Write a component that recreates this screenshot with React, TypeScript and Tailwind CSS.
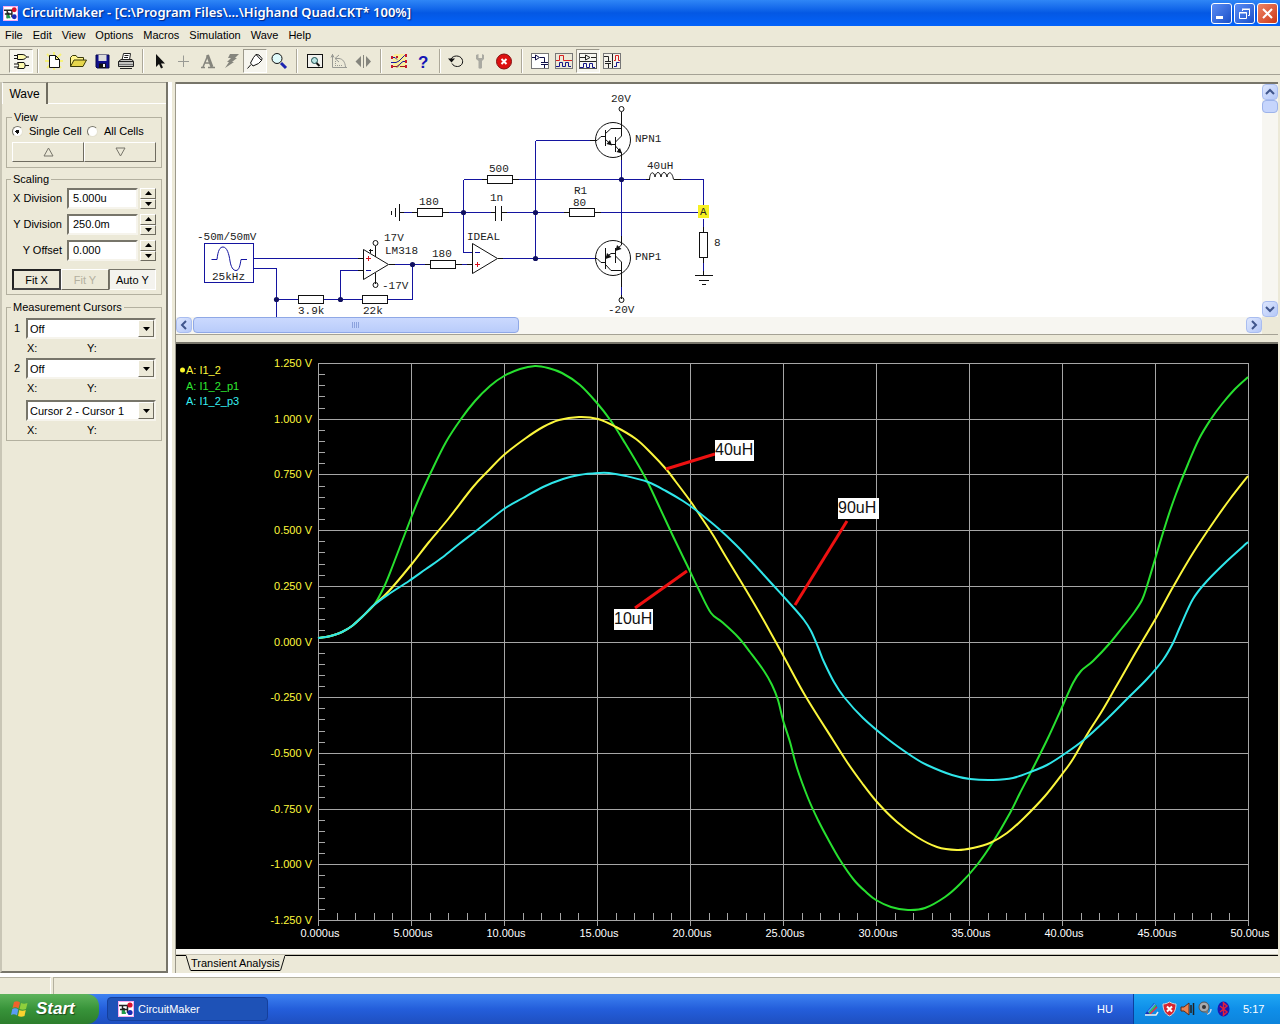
import React from "react";

type Pt = [number, number];

const START: Pt[] = [[318, 638], [326, 637], [334, 635], [342, 632], [352, 626], [362, 617], [374, 605]];

const GREEN: Pt[] = [
  ...START,
  [384, 587], [393, 565], [411, 518], [420, 496], [432, 470], [446, 442], [461, 419], [475, 401], [490, 386], [504, 376],
  [520, 369], [535, 366], [548, 368], [562, 373], [580, 385], [597, 403], [611, 421], [625, 443], [645, 477], [658, 504],
  [672, 534], [687, 565], [699, 590], [711, 613], [722, 622], [738, 637], [750, 652], [764, 671], [772, 685], [778, 700],
  [783, 720], [790, 742], [797, 768], [808, 798], [818, 820], [828, 839], [840, 860], [854, 880], [866, 892], [876, 900],
  [891, 907], [908, 910], [925, 908], [945, 897], [960, 884], [977, 865], [993, 842], [1010, 813], [1020, 793],
  [1032, 770], [1047, 740], [1063, 705], [1073, 683], [1081, 671], [1093, 661], [1110, 643], [1122, 628], [1133, 614],
  [1142, 600], [1147, 586], [1156, 556], [1167, 520], [1176, 494], [1188, 464], [1199, 439], [1211, 419], [1222, 404],
  [1235, 389], [1248, 377],
];

const YELLOW: Pt[] = [
  ...START,
  [389, 591], [411, 565], [429, 542], [449, 518], [473, 487], [489, 470], [505, 454], [526, 438], [543, 427],
  [559, 420], [579, 417], [598, 419], [616, 427], [636, 439], [651, 453], [666, 469], [676, 482], [691, 502], [699, 514],
  [713, 535], [726, 557], [743, 585], [763, 619], [784, 657], [806, 697], [833, 740], [847, 762], [862, 783],
  [877, 802], [897, 822], [917, 837], [937, 847], [957, 850], [973, 848], [990, 843], [1007, 833], [1024, 818],
  [1045, 796], [1063, 773], [1073, 759], [1088, 733], [1102, 711], [1117, 685], [1133, 657], [1156, 618],
  [1173, 587], [1193, 553], [1215, 520], [1230, 499], [1248, 476],
];

const CYAN: Pt[] = [
  ...START,
  [389, 594], [409, 581], [426, 569], [443, 557], [459, 544], [476, 531], [504, 509], [523, 498], [543, 487],
  [563, 479], [579, 475], [598, 473], [609, 473], [626, 476], [648, 482], [666, 491], [683, 501], [697, 511], [719, 529],
  [736, 545], [753, 563], [773, 585], [793, 607], [804, 620], [811, 631], [818, 647], [824, 662], [834, 682], [844, 697],
  [863, 718], [889, 740], [913, 757], [927, 765], [952, 775], [970, 779], [993, 780], [1013, 778], [1033, 771],
  [1047, 765], [1063, 755], [1085, 739], [1108, 718], [1128, 698], [1147, 679], [1163, 660], [1173, 643],
  [1180, 627], [1193, 599], [1207, 581], [1227, 561], [1248, 542],
];

function smooth(p: Pt[]): string {
  let d = `M${p[0][0]},${p[0][1]}`;
  for (let i = 0; i < p.length - 1; i++) {
    const a = p[i - 1] ?? p[i];
    const b = p[i];
    const c = p[i + 1];
    const e = p[i + 2] ?? c;
    d += `C${(b[0] + (c[0] - a[0]) / 6).toFixed(1)},${(b[1] + (c[1] - a[1]) / 6).toFixed(1)} ${(c[0] - (e[0] - b[0]) / 6).toFixed(1)},${(c[1] - (e[1] - b[1]) / 6).toFixed(1)} ${c[0]},${c[1]}`;
  }
  return d;
}

const Y_LABELS = ["1.250 V", "1.000 V", "0.750 V", "0.500 V", "0.250 V", "0.000 V", "-0.250 V", "-0.500 V", "-0.750 V", "-1.000 V", "-1.250 V"];
const X_LABELS = ["0.000us", "5.000us", "10.00us", "15.00us", "20.00us", "25.00us", "30.00us", "35.00us", "40.00us", "45.00us", "50.00us"];

const NOTES = [
  { text: "40uH", x: 715, y: 440, w: 39, line: "M666,469L715,454" },
  { text: "90uH", x: 838, y: 498, w: 41, line: "M795,605L847,521" },
  { text: "10uH", x: 614, y: 609, w: 39, line: "M635,608L687,571" },
];

function WaveChart() {
  const yAt = (i: number) => Math.round(363 + i * 55.7);
  return (
    <svg viewBox="176 344 1102 605" className="block h-auto w-full bg-black" role="img" aria-label="Transient analysis waveforms">
      <g stroke="#a6a6a6" strokeWidth="1" shapeRendering="crispEdges">
        {Y_LABELS.map((_, i) => (
          <line key={i} x1="318" x2="1249" y1={yAt(i) + 0.5} y2={yAt(i) + 0.5} />
        ))}
        {X_LABELS.map((_, i) => (
          <line key={i} x1={318.5 + i * 93} x2={318.5 + i * 93} y1="363" y2="926" />
        ))}
        {Array.from({ length: 50 }, (_, i) => (
          <line key={i} x1="318" x2="325" y1={Math.round(363 + i * 11.14) + 0.5} y2={Math.round(363 + i * 11.14) + 0.5} />
        ))}
        {Array.from({ length: 50 }, (_, i) => (
          <line key={i} y1="913" y2="920" x1={Math.round(318 + i * 18.6) + 0.5} x2={Math.round(318 + i * 18.6) + 0.5} />
        ))}
      </g>
      <g fill="none" strokeWidth="2">
        <path d={smooth(GREEN)} stroke="#27e02f" />
        <path d={smooth(YELLOW)} stroke="#fbf63c" />
        <path d={smooth(CYAN)} stroke="#2fe6ea" />
      </g>
      <g fontFamily="'Liberation Sans', Arial, sans-serif" fontSize="11">
        <circle cx="182.5" cy="370" r="2.5" fill="#fdf62a" />
        <text x="186" y="374" fill="#fff83c">A: I1_2</text>
        <text x="186" y="390" fill="#2fe832">A: I1_2_p1</text>
        <text x="186" y="405" fill="#37efF2">A: I1_2_p3</text>
        {Y_LABELS.map((t, i) => (
          <text key={t} x="312" y={yAt(i) + 4} textAnchor="end" fill="#fff83c">{t}</text>
        ))}
        {X_LABELS.map((t, i) => (
          <text key={t} x={320 + i * 93} y="937" textAnchor="middle" fill="#fff">{t}</text>
        ))}
      </g>
      {NOTES.map((n) => (
        <g key={n.text}>
          <path d={n.line} stroke="#ee1111" strokeWidth="3" />
          <rect x={n.x} y={n.y} width={n.w} height="21" fill="#fff" />
          <text x={n.x} y={n.y + 15} fontFamily="'Liberation Sans', Arial, sans-serif" fontSize="16" fill="#111">{n.text}</text>
        </g>
      ))}
    </svg>
  );
}

function Schematic() {
  const nodes: Pt[] = [[276, 299], [340, 299], [412, 264], [463, 212], [535, 212], [535, 258], [621, 179]];
  const labels: [string, number, number][] = [
    ["20V", 611, 102], ["NPN1", 635, 142], ["500", 489, 172], ["40uH", 647, 169], ["1n", 490, 201], ["R1", 574, 194],
    ["80", 573, 206], ["180", 419, 205], ["IDEAL", 467, 240], ["-50m/50mV", 197, 240], ["25kHz", 212, 280],
    ["17V", 384, 241], ["LM318", 385, 254], ["-17V", 382, 289], ["180", 432, 257], ["3.9k", 298, 314], ["22k", 363, 314],
    ["PNP1", 635, 260], ["-20V", 608, 313], ["8", 714, 246],
  ];
  return (
    <svg width="1085" height="233" viewBox="176 84 1085 233" className="block shrink-0" role="img" aria-label="Circuit schematic">
      <g fill="none" stroke="#1414a0" strokeWidth="1" shapeRendering="crispEdges" transform="translate(.5 .5)">
        <path d="M204,243H253V282H204Z" />
        <path d="M253,258H357M253,268H276V318M276,299H298M323,299H362M387,299H412V264M394,264H424M340,299V270H357M461,264H466" />
        <path d="M403,212H411M448,212H490M463,179V252H472M463,179H481M518,179H645M506,212H563M600,212H698M535,140V258M535,140H590M502,258H596M621,159V237M680,179H703V205M703,218V226M703,262V270M621,285V294" />
      </g>
      <path d="M211.500 259.500H217C218 250 220 247 223 247C227 247 229 254 230 261C231 267 233 270.500 236 270.500C239 270.500 240 266 241 259.500H247" fill="none" stroke="#1414a0" />
      <g fill="none" stroke="#111" strokeWidth="1" shapeRendering="crispEdges" transform="translate(.5 .5)">
        <path d="M357,258H363M357,270H363M375,245V256M375,272V283M388,264H394M368,250H372M370,248V252" />
        <path d="M399,203V220M395,207V216M391,210V214M399,212H403M411,212H417M442,212H448M424,264H430M455,264H461M466,264H472M481,179H487M512,179H518M495,205V220M501,205V220M490,212H495M501,212H506M563,212H569M594,212H600M497,258H502M645,179H649M673,179H680M703,226V232M703,257V262M703,270V275M694,275H712M698,280H708M701,284H705" />
        <path d="M298,295H323V303H298ZM362,295H387V303H362ZM430,260H455V268H430ZM417,208H442V216H417ZM487,175H512V183H487ZM569,208H594V216H569ZM699,232H707V257H699Z" />
        <path d="M621,111V122M621,294V298M605,129V145M615,136V151M605,247V268M615,247V262" />
      </g>
      <g fill="none" stroke="#111">
        <path d="M363.500 249.500V279.500L388.500 264.500ZM472.500 243.500V273.500L497.500 258.500Z" />
        <circle cx="375.500" cy="243" r="2.500" />
        <circle cx="375.500" cy="285" r="2.500" />
        <circle cx="621.500" cy="109" r="2.500" />
        <circle cx="621.500" cy="300" r="2.500" />
        <circle cx="613" cy="140" r="17.500" />
        <circle cx="613" cy="258" r="17.500" />
        <path d="M590 140.500H597L601 136.500H605M605 134L611 128.500H621.500M605 139L611 144.500H615M615.500 142L621.500 136V120M615.500 146L621.500 153V160" />
        <path d="M595 258.500H597L601 262.500H605M605 264L611 270.500H621.500V287M605 258L611 253.500H615M615.500 250L621.500 245V236M615.500 256L621.500 262V272" />
        <path d="M649.500 179.500C650 171 654 171 655 177C656 171 660 171 661 177C662 171 666 171 667 177C668 171 672 171 673.500 179.500" />
      </g>
      <path d="M612 145.500L606.500 144L610 140ZM622 153.500L616.500 152L620 148ZM605.500 259L607 253L611.500 257ZM615.500 251L617 245L621.500 249Z" fill="#111" />
      <path d="M366 258.500H371M368.500 256V261M475 264.500H480M477.500 262V267" stroke="#d8101c" />
      <path d="M366 270.500H371M475 252.500H480" stroke="#1414a0" />
      <g fill="#101060">
        {nodes.map(([x, y]) => (
          <circle key={`${x}-${y}`} cx={x + 0.5} cy={y + 0.5} r="2.600" />
        ))}
      </g>
      <rect x="698" y="205" width="11" height="13" fill="#f7f022" />
      <g fontFamily="'Liberation Mono', 'Courier New', monospace" fontSize="11" fill="#222">
        <text x="700" y="215">A</text>
        {labels.map(([t, x, y], i) => (
          <text key={i} x={x} y={y}>{t}</text>
        ))}
      </g>
    </svg>
  );
}

function Logo({ className }: { className: string }) {
  return (
    <svg viewBox="0 0 16 16" className={className} aria-hidden="true">
      <rect width="16" height="16" fill="#f6a8ee" />
      <rect x="1" y="1" width="14" height="14" fill="#fff" />
      <path d="M1 4.500H11M4.500 4V13M2 8.500H9M9.500 4V12M6 7V11" stroke="#222" strokeWidth="1.500" fill="none" />
      <circle cx="12" cy="4" r="2.600" fill="#d8122c" />
      <circle cx="12" cy="11.500" r="2.600" fill="#1b2bb5" />
      <path d="M4 9C6 9 8 10.500 8 13H4Z" fill="#1f9c48" />
    </svg>
  );
}

const ICONS: Record<string, React.ReactNode> = {
  Parts: (
    <g fill="#fffbb0" stroke="#111">
      <path d="M6.500 3.500H11C14 3.500 15 5 15.500 6C15 7 14 8.500 11 8.500H6.500ZM3 4.500H6M3 7.500H6M15.500 6H18" />
      <path d="M6.500 11.500H13C14.500 13 14.500 16 13 17.500H6.500C8 15 8 14 6.500 11.500ZM3 13H7M3 16H7M14 14.500H18" />
    </g>
  ),
  New: (
    <g>
      <path d="M3 3L17 17M17 3L3 17M10 1V19M1 10H19" stroke="#f7f27a" strokeWidth="2" />
      <path d="M5.500 4.500H11.500L15.500 8.500V16.500H5.500ZM11.500 4.500V8.500H15.500" fill="#fff" stroke="#111" />
    </g>
  ),
  Open: (
    <g stroke="#3a3a08" fill="#fff48c">
      <path d="M2.500 15.500V6.500L4.500 4.500H8L9.500 6.500H15.500V9" />
      <path d="M2.500 15.500L6 9H18.500L15 15.500Z" fill="#e6d64c" />
    </g>
  ),
  Save: (
    <g>
      <path d="M4 4H17V17H5L4 16Z" fill="#10108c" stroke="#08084a" />
      <rect x="6.500" y="4" width="8" height="6" fill="#ddd" />
      <rect x="7" y="12.500" width="7" height="4.500" fill="#111" />
      <rect x="11" y="13" width="2" height="3" fill="#eee" />
    </g>
  ),
  Print: (
    <g stroke="#222" fill="#fff">
      <path d="M6 9L7.500 2.500H14.500L13.500 9ZM8.500 4.500H12.500M8 6.500H12" />
      <path d="M2.500 10.500L5 8.500H16L17.500 10.500V15.500H2.500Z" fill="#c4c4c0" />
      <path d="M2.500 10.500H17.500M4 17.500H16" />
      <path d="M3 13.500H17" stroke="#777" />
    </g>
  ),
  Select: <path d="M7 3V16L10 13L12 17.500L14 16.500L12 12.500H16Z" fill="#111" />,
  Wire: <path d="M10.500 4.500V16M5 10.500H16" stroke="#999a94" fill="none" />,
  Text: (
    <g fill="none" stroke="#85857d">
      <path d="M4 16.500H8M11 16.500H18" strokeWidth="1.500" />
      <path d="M6 16L11 4M7.500 12H13.500" strokeWidth="1.500" />
      <path d="M10.500 4L15 16" strokeWidth="3" />
    </g>
  ),
  Delete: <path d="M9 3H18L14 7H16L11 11H13L4 17L8 11H6L10 7H7Z" fill="#85857d" />,
  Probe: <path d="M2.500 17.500L6 13.500M5.500 12L8 15L13.500 12.500L16.500 9.500L11 3.500L8.500 6.500ZM11 3.500L14 4L17 7.500L16.500 9.500" fill="#fff" stroke="#111" />,
  Zoom: (
    <g>
      <circle cx="8" cy="7.500" r="5" fill="#dffafa" stroke="#111" />
      <path d="M12 12L17 17" stroke="#1d25b0" strokeWidth="3" />
    </g>
  ),
  Fit: (
    <g fill="none" stroke="#111">
      <rect x="2.500" y="3.500" width="15" height="13" fill="#f2f2ee" />
      <circle cx="9.500" cy="9.500" r="3" fill="#b9e3e3" stroke="#1b4d4d" />
      <path d="M11.500 12L14.500 15" strokeWidth="2" />
    </g>
  ),
  Rotate: (
    <g fill="none" stroke="#999a94">
      <path d="M3.500 3V16.500H18M2 6.500L3.500 3.500L5 6.500" />
      <path d="M6 7.500H10C14 8 16 11 16.500 16M10 4L6 7.500L10 11" />
      <path d="M6 14.500H14M6.500 10V14" strokeDasharray="1 1" />
    </g>
  ),
  Mirror: <path d="M8 5V16L2.500 10.500ZM13 5V16L18 10.500ZM10 4H11V17H10Z" fill="#85857d" />,
  Route: (
    <g fill="none">
      <rect x="4" y="3" width="13" height="14" rx="3" fill="#f9ee9a" />
      <path d="M3 6.500H6L8 8.500M7 11.500L10 10L15.500 4.500H18M2 11.500H7M8 16.500L12 12L14 10.500H18" stroke="#1717a0" />
      <path d="M3 15.500H8L10 13.500M11 15.500H18" stroke="#a11721" />
      <path d="M2 5H4V8H2ZM2 14H4V17H2ZM16 3H18V6H16ZM16 9H18V12H16ZM16 14H18V17H16ZM7 5H9V7H7Z" fill="#c8172d" />
    </g>
  ),
  Help: (
    <text x="5" y="17" fontFamily="'Liberation Sans', Arial, sans-serif" fontWeight="700" fontSize="17" fill="#1515b5">?</text>
  ),
  Reset: (
    <g>
      <path d="M5 8C7 4 14 4 16 8C18 12 15 15.500 11.500 15.500C9 15.500 7 14.500 6 12.500" fill="none" stroke="#111" />
      <path d="M2 7.500H9L5.500 11.500Z" fill="#111" />
    </g>
  ),
  Options: <path d="M6 4V8L8.500 10V17C9 18 11 18 12 17V10L14 8V4L12 3V7H8.500V3Z" fill="#aaaaa2" />,
  Stop: (
    <g>
      <circle cx="10" cy="10.500" r="7.500" fill="#dd1010" stroke="#851010" />
      <path d="M7.500 8L12.500 13M12.500 8L7.500 13" stroke="#fff" strokeWidth="2" />
    </g>
  ),
  Schematic: (
    <g fill="none">
      <rect x="1.500" y="2.500" width="17" height="15" fill="#fff" stroke="#777" />
      <path d="M2 6.500H5M5.500 4V9L9.500 6.500ZM10 6.500H14.500V11M11 11.500H18M11 13.500H18M14.500 14V17" stroke="#10104a" />
    </g>
  ),
  Waves: (
    <g fill="none">
      <rect x="1.500" y="2.500" width="17" height="15" fill="#ece9d8" stroke="#777" />
      <path d="M2 9.500H5.500V4.500H9.500V9.500H18" stroke="#d62020" />
      <path d="M2 15.500H5.500V11.500H8.500V15.500H11.500V11.500H14.500V15.500H17" stroke="#15158a" />
    </g>
  ),
  "Split horizontally": (
    <g fill="none">
      <rect x="1.500" y="2.500" width="17" height="15" fill="#f7f7f2" stroke="#555" />
      <path d="M2 6.500H7M7.500 4V9L12 6.500ZM13 6.500H18M2 10.500H18" stroke="#222" />
      <path d="M2 16.500H5.500V12.500H8.500V16.500H11.500V12.500H14.500V16.500H17" stroke="#15158a" />
    </g>
  ),
  "Split vertically": (
    <g fill="none">
      <rect x="1.500" y="2.500" width="17" height="15" fill="#f4f2ea" stroke="#777" />
      <path d="M2 5.500H6.500V10.500M3 10.500H9M3 12.500H9M6.500 13V17M10.500 3V17" stroke="#222" />
      <path d="M12 9.500H13.500V4.500H16.500V9.500H18" stroke="#d62020" />
      <path d="M12 15.500H14.500V11.500H17.500" stroke="#15158a" />
    </g>
  ),
};

const GROUPS: { gap: string; items: string[] }[] = [
  { gap: "", items: ["Parts"] },
  { gap: "w-[9px]", items: ["New", "Open", "Save", "Print"] },
  { gap: "w-[9px]", items: ["Select", "Wire", "Text", "Delete", "Probe", "Zoom"] },
  { gap: "w-3", items: ["Fit", "Rotate", "Mirror"] },
  { gap: "w-3", items: ["Route", "Help"] },
  { gap: "w-[9px]", items: ["Reset", "Options", "Stop"] },
  { gap: "w-3", items: ["Schematic", "Waves", "Split horizontally", "Split vertically"] },
];
const PRESSED = ["Parts", "Probe", "Split horizontally"];

function ToolBar() {
  return (
    <div className="flex h-7 items-center border-b border-[#a5a295] pl-[9px]" role="toolbar" aria-label="Main">
      {GROUPS.map(({ gap, items }, gi) => (
        <React.Fragment key={gi}>
          {gap && (
            <span className={`flex justify-center ${gap}`}>
              <span className="h-6 w-0.5 border-r border-l border-r-white border-l-[#aca899]" />
            </span>
          )}
          {items.map((name) => (
            <button
              key={name}
              aria-label={name}
              className={
                PRESSED.includes(name)
                  ? "flex size-6 items-center justify-center border border-t-[#9c998b] border-r-white border-b-white border-l-[#9c998b] bg-[#f6f5ee]"
                  : "flex size-6 items-center justify-center"
              }
            >
              <svg viewBox="0 0 20 20" className="size-5 shrink-0" aria-hidden="true">{ICONS[name]}</svg>
            </button>
          ))}
        </React.Fragment>
      ))}
    </div>
  );
}

const RAISED = "border border-t-white border-l-white border-r-[#6f6c60] border-b-[#6f6c60] bg-[#ece9d8]";
const SUNKEN = "border-2 border-t-[#77756a] border-l-[#77756a] border-r-[#f6f4ec] border-b-[#f6f4ec] bg-white";

function Field({ id, label, value }: { id: string; label: string; value: string }) {
  return (
    <div className="flex h-[21px] items-center">
      <label htmlFor={id} className="w-[55px] pb-0.5 text-right">{label}</label>
      <input id={id} defaultValue={value} className={`ml-[5px] h-[21px] w-[71px] px-1 pb-0.5 outline-none ${SUNKEN}`} />
      <span className="ml-0.5 flex h-[21px] w-4 flex-col">
        <button aria-label={`Increase ${label}`} className={`flex flex-1 items-center justify-center ${RAISED}`}>
          <svg viewBox="0 0 7 4" className="h-1 w-[7px]"><path d="M0 4L3.500 0L7 4Z" /></svg>
        </button>
        <button aria-label={`Decrease ${label}`} className={`flex flex-1 items-center justify-center ${RAISED}`}>
          <svg viewBox="0 0 7 4" className="h-1 w-[7px]"><path d="M0 0L3.500 4L7 0Z" /></svg>
        </button>
      </span>
    </div>
  );
}

function Cursor({ id, label, value }: { id: string; label: string; value: string }) {
  return (
    <div>
      <div className="flex h-[21px] items-center pl-[7px]">
        <label htmlFor={id} className="w-3 pb-0.5">{label}</label>
        <span className="relative flex w-[130px]">
          <select id={id} aria-label={label ? `Cursor ${label}` : "Cursor difference"} className={`h-[21px] w-full appearance-none px-0.5 outline-none ${SUNKEN}`}>
            <option>{value}</option>
          </select>
          <span className={`pointer-events-none absolute top-0.5 right-0.5 flex h-[17px] w-4 items-center justify-center ${RAISED}`}>
            <svg viewBox="0 0 7 4" className="h-1 w-[7px]"><path d="M0 0L3.500 4L7 0Z" /></svg>
          </span>
        </span>
      </div>
      <div className="flex h-[19px] items-center pb-0.5 pl-5">
        <span className="w-[60px]">X:</span>
        <span>Y:</span>
      </div>
    </div>
  );
}

const GROUPBOX = "min-w-0 border border-[#b3b09f]";
const LEGEND = "ml-1 px-0.5 text-[11px] leading-[14px]";
const RADIO = "size-[11px] appearance-none rounded-full border border-t-[#77756a] border-l-[#77756a] border-r-[#e4e1d0] border-b-[#e4e1d0] bg-white checked:bg-[radial-gradient(circle,#111_0_2px,#fff_2px)]";

function SidePanel() {
  return (
    <aside className="flex w-[168px] shrink-0 flex-col border-r-2 border-b-2 border-l-2 border-r-[#77756a] border-b-[#77756a] border-l-[#c9c6b6] text-[11px] leading-[14px] text-black">
      <div className="flex h-[22px]" role="tablist">
        <button role="tab" aria-selected="true" className="w-[46px] border-t border-r-2 border-l border-t-[#a5a295] border-r-[#6f6c60] border-l-white text-[12px]">
          Wave
        </button>
        <span className="flex-1 border-t border-b border-t-[#a5a295] border-b-white" />
      </div>
      <div className="flex flex-col px-1 pt-1.5">
        <fieldset className={`${GROUPBOX} px-[5px] pb-[5px]`}>
          <legend className="px-0.5 text-[11px] leading-[14px]">View</legend>
          <div className="flex h-[15px] items-center pb-px">
            <input id="single" name="cells" type="radio" defaultChecked className={RADIO} />
            <label htmlFor="single" className="ml-1.5 w-[58px] whitespace-nowrap">Single Cell</label>
            <input id="all" name="cells" type="radio" className={RADIO} />
            <label htmlFor="all" className="ml-1.5">All Cells</label>
          </div>
          <div className="mt-[3px] flex h-5">
            <button aria-label="Scroll up" className={`flex flex-1 items-center justify-center ${RAISED}`}>
              <svg viewBox="0 0 11 10" className="h-2.5 w-[11px]"><path d="M1 9L5.500 1L10 9Z" fill="none" stroke="#77756a" /></svg>
            </button>
            <button aria-label="Scroll down" className={`flex flex-1 items-center justify-center ${RAISED}`}>
              <svg viewBox="0 0 11 10" className="h-2.5 w-[11px]"><path d="M1 1L5.500 9L10 1Z" fill="none" stroke="#77756a" /></svg>
            </button>
          </div>
        </fieldset>
        <fieldset className={`${GROUPBOX} mt-1 pb-1`}>
          <legend className={LEGEND}>Scaling</legend>
          <div className="flex flex-col gap-[5px] pt-0.5">
            <Field id="xdiv" label="X Division" value="5.000u" />
            <Field id="ydiv" label="Y Division" value="250.0m" />
            <Field id="yoff" label="Y Offset" value="0.000" />
          </div>
          <div className="mt-2 flex h-[21px] px-[5px]">
            <button className="flex-1 border-2 border-t-[#222] border-r-[#444] border-b-[#444] border-l-[#222]">Fit X</button>
            <button disabled className={`flex-1 text-[#b3b09f] ${RAISED}`}>Fit Y</button>
            <button aria-pressed="true" className="flex-1 border border-t-[#77756a] border-r-white border-b-white border-l-[#77756a] bg-[#f4f3ee]">Auto Y</button>
          </div>
        </fieldset>
        <fieldset className={`${GROUPBOX} mt-[5px]`}>
          <legend className={LEGEND}>Measurement Cursors</legend>
          <div className="pt-1">
            <Cursor id="c1" label="1" value="Off" />
            <Cursor id="c2" label="2" value="Off" />
            <div className="pt-0.5">
              <Cursor id="c3" label="" value="Cursor 2 - Cursor 1" />
            </div>
          </div>
        </fieldset>
      </div>
    </aside>
  );
}

const SCROLL_BTN = "flex size-4 shrink-0 items-center justify-center rounded-sm border border-[#a9bdf0] bg-linear-to-br from-[#dde6fd] to-[#b5c8f8]";

function ScrollButton({ label, d }: { label: string; d: string }) {
  return (
    <button aria-label={label} className={SCROLL_BTN}>
      <svg viewBox="0 0 10 10" className="size-2.5"><path d={d} fill="none" stroke="#40568c" strokeWidth="2" /></svg>
    </button>
  );
}

function SchematicPane() {
  return (
    <section className="border-t-2 border-[#77756a] bg-white">
      <div className="flex h-[233px]">
        <div className="min-w-0 flex-1 overflow-hidden"><Schematic /></div>
        <div className="flex w-4 shrink-0 flex-col bg-[#f7f6f1]">
          <ScrollButton label="Scroll up" d="M1 7L5 3L9 7" />
          <span className="h-[13px] rounded-sm border border-[#9db3ea] bg-[#c6d5fc]" />
          <span className="flex-1" />
          <ScrollButton label="Scroll down" d="M1 3L5 7L9 3" />
        </div>
      </div>
      <div className="flex h-[17px] bg-[#ece9d8]">
        <div className="flex min-w-0 flex-1 bg-[#f7f6f1]">
          <ScrollButton label="Scroll left" d="M7 1L3 5L7 9" />
          <span className="ml-px flex h-4 w-[30%] items-center justify-center gap-px rounded-sm border border-[#8fa8e6] bg-linear-to-b from-[#cbd9fe] to-[#b9ccfa]">
            {[0, 1, 2, 3].map((i) => <span key={i} className="h-1.5 w-px bg-[#8ba2dd]" />)}
          </span>
          <span className="flex-1" />
          <ScrollButton label="Scroll right" d="M3 1L7 5L3 9" />
        </div>
        <span className="w-4" />
      </div>
    </section>
  );
}

const MENU = ["File", "Edit", "View", "Options", "Macros", "Simulation", "Wave", "Help"];
const CAPTION = "flex size-[21px] items-center justify-center rounded-[3px] border border-white";

export default function App() {
  return (
    <div className="flex min-h-screen flex-col bg-[#ece9d8] font-['Liberation_Sans',Arial,sans-serif] text-black">
      <header className="flex h-[26px] items-center gap-0.5 bg-linear-to-b from-[#2f86f6] via-[#0458e4] to-[#0463fa] pr-0.5 pl-[3px]">
        <Logo className="size-[15px] shrink-0" />
        <h1 className="ml-0.5 flex-1 truncate font-['Noto_Sans',sans-serif] text-[13px] font-semibold text-white [text-shadow:1px_1px_1px_#07267e]">
          CircuitMaker - [C:\Program Files\...\Highand Quad.CKT* 100%]
        </h1>
        <button aria-label="Minimize" className={`${CAPTION} bg-linear-to-br from-[#5b8df5] to-[#1a4fc8]`}>
          <svg viewBox="0 0 13 13" className="size-[13px]"><path d="M1 9H8V12H1Z" fill="#fff" /></svg>
        </button>
        <button aria-label="Restore" className={`${CAPTION} bg-linear-to-br from-[#5b8df5] to-[#1a4fc8]`}>
          <svg viewBox="0 0 13 13" className="size-[13px]"><path d="M4.500 4V2.500H11.500V8.500H10M1.500 5.500H8.500V11.500H1.500ZM4 2H12M1 6H9" fill="none" stroke="#fff" /></svg>
        </button>
        <button aria-label="Close" className={`${CAPTION} bg-linear-to-br from-[#ee8465] to-[#cc3510]`}>
          <svg viewBox="0 0 13 13" className="size-[13px]"><path d="M2 2L11 11M11 2L2 11" stroke="#fff" strokeWidth="2" /></svg>
        </button>
      </header>
      <nav className="flex h-[21px] items-center gap-2.5 border-b border-[#a5a295] pb-0.5 pl-[5px] text-[11px]">
        {MENU.map((m) => <button key={m}>{m}</button>)}
      </nav>
      <ToolBar />
      <main className="mt-[7px] flex flex-1">
        <SidePanel />
        <div className="w-2 shrink-0 border-r border-r-[#9c998b] bg-linear-to-r from-white from-50% to-[#ece9d8] to-50%" />
        <div className="mr-0.5 flex min-w-0 flex-1 flex-col">
          <SchematicPane />
          <div className="h-[10px] border-t border-b-2 border-t-[#a5a295] border-b-[#77756a]" />
          <WaveChart />
          <div className="h-1.5 border-b border-[#c5c2b3] bg-[#f8f7f1]" />
          <div className="flex h-4 text-[11px]" role="tablist">
            <span className="w-2.5 border-t border-black" />
            <svg viewBox="0 0 5 16" className="h-4 w-[5px]"><path d="M0 .5L4.500 15.500" stroke="#111" fill="none" /></svg>
            <button role="tab" aria-selected="true" className="border-b border-black leading-[14px] whitespace-nowrap">Transient Analysis</button>
            <svg viewBox="0 0 5 16" className="h-4 w-[5px]"><path d="M.5 15.500L5 .5" stroke="#111" fill="none" /></svg>
            <span className="flex-1 border-t border-black" />
          </div>
        </div>
      </main>
      <div className="flex h-[21px] gap-0.5 border-t-4 border-white">
        <span className="w-[51px] border-t border-r border-t-[#b3b09f] border-r-white" />
        <span className="flex-1 border-t border-l border-[#b3b09f]" />
      </div>
      <footer className="flex h-[30px] items-stretch bg-linear-to-b from-[#3e82f1] via-[#245edb] to-[#1e4fc0] text-[11px] text-white">
        <button className="flex w-[99px] items-center gap-1.5 rounded-r-xl bg-linear-to-b from-[#5db35b] via-[#38943a] to-[#2c7d2c] pl-2.5">
          <svg viewBox="0 0 20 20" className="size-5" aria-hidden="true">
            <path d="M4 3C6 2 8 2 10 3.500L8.500 9.500C6.500 8 4.500 8 2.500 9Z" fill="#f0622c" />
            <path d="M11 4C13 5 15 5 17.500 4L16 10C14 11 11.500 11 9.500 10Z" fill="#8fcf3c" />
            <path d="M2.300 10C4 9 6.500 9 8.300 10.500L7 16.500C5 15 3 15 1 16Z" fill="#5b9cf5" />
            <path d="M9.300 11C11 12 13.500 12 15.800 11L14.500 17C12.500 18 10 18 8 17Z" fill="#fbd22f" />
          </svg>
          <span className="text-[17px] font-bold italic [text-shadow:1px_1px_1px_#1c4a1c]">Start</span>
        </button>
        <button className="my-[3px] ml-2 flex w-[161px] items-center gap-1 rounded-sm border border-[#153f9c] bg-[#1e52b7] pl-2.5">
          <Logo className="size-4 shrink-0" />
          CircuitMaker
        </button>
        <span className="flex-1" />
        <span className="mr-5 self-center">HU</span>
        <div className="flex w-[147px] items-center border-l border-[#0c3f9e] bg-linear-to-b from-[#1fa7f4] via-[#0f8fe9] to-[#0d84dc] pl-2.5">
          <div className="flex gap-[3px]">
            <svg viewBox="0 0 15 16" className="h-4 w-[15px]"><path d="M1 13L10 2L13 5L5 13Z" fill="#1a2fb8" /><path d="M4 11L11 3" stroke="#4ea3ff" strokeWidth="1.500" /><path d="M5 12L12 4" stroke="#3cd050" strokeWidth="1.500" /><path d="M6 13L13 6" stroke="#ef3340" strokeWidth="1.500" /><path d="M1 14H12L14 11" stroke="#eee" strokeWidth="1.500" fill="none" /></svg>
            <svg viewBox="0 0 15 16" className="h-4 w-[15px]"><path d="M7.500 1C10 2.500 12 3 14 3C14 9 12 13 7.500 15C3 13 1 9 1 3C3 3 5 2.500 7.500 1Z" fill="#d8232f" stroke="#d9d9d9" /><path d="M5 5.500L10 10.500M10 5.500L5 10.500" stroke="#fff" strokeWidth="2" /></svg>
            <svg viewBox="0 0 15 16" className="h-4 w-[15px]"><path d="M1 6H4L9 2V14L4 10H1Z" fill="#e98352" stroke="#5c2b18" /><path d="M11 4V12M13.500 2V14" stroke="#222" strokeWidth="1.500" /></svg>
            <svg viewBox="0 0 15 16" className="h-4 w-[15px]"><circle cx="6" cy="6" r="5" fill="#a8abad" stroke="#555" /><circle cx="6" cy="6" r="2" fill="#333" /><path d="M9 13C11 13 13 11 13 8M7 15" stroke="#c7d9f2" strokeWidth="1.500" fill="none" /><path d="M6 11L10 13V9" fill="#777" /></svg>
            <svg viewBox="0 0 15 16" className="h-4 w-[15px]"><ellipse cx="7.500" cy="8" rx="6" ry="7.500" fill="#1818b5" /><path d="M4 5L11 11L7.500 14V2L11 5L4 11" fill="none" stroke="#e01f3c" strokeWidth="1.500" /></svg>
          </div>
          <time className="ml-3">5:17</time>
        </div>
      </footer>
    </div>
  );
}
